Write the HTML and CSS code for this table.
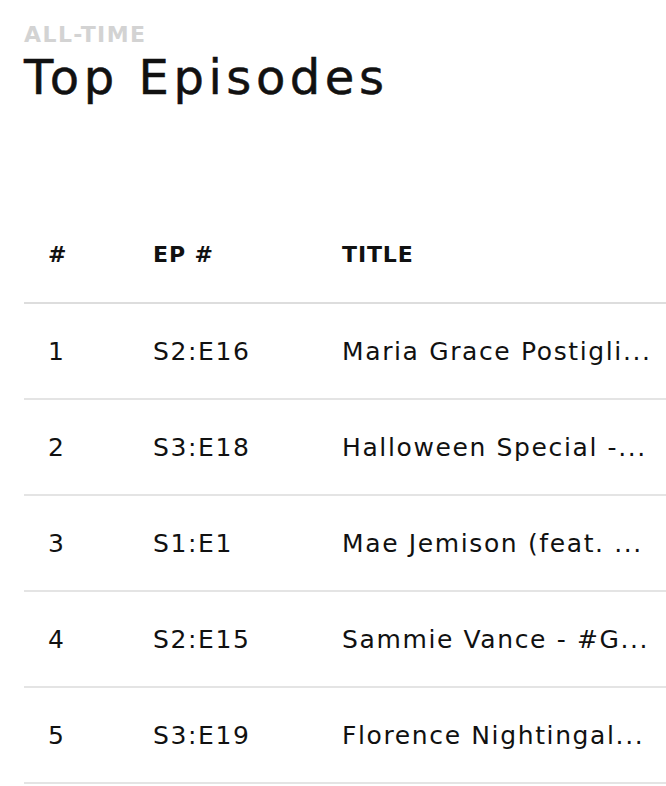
FILE: index.html
```html
<!DOCTYPE html>
<html>
<head>
<meta charset="utf-8">
<link rel="stylesheet" href="styles.css">
</head>
<body>
<main class="page">
  <header class="head">
    <div class="eyebrow">ALL-TIME</div>
    <h1 class="title">Top Episodes</h1>
  </header>
  <table class="episodes">
    <colgroup>
      <col class="col-rank">
      <col class="col-ep">
      <col class="col-title">
    </colgroup>
    <thead>
      <tr><th>#</th><th>EP #</th><th>TITLE</th></tr>
    </thead>
    <tbody>
      <tr><td>1</td><td>S2:E16</td><td>Maria Grace Postigli...</td></tr>
      <tr><td>2</td><td>S3:E18</td><td>Halloween Special -...</td></tr>
      <tr><td>3</td><td>S1:E1</td><td>Mae Jemison (feat. ...</td></tr>
      <tr><td>4</td><td>S2:E15</td><td>Sammie Vance - #G...</td></tr>
      <tr><td>5</td><td>S3:E19</td><td>Florence Nightingal...</td></tr>
    </tbody>
  </table>
</main>
</body>
</html>
```
FILE: styles.css
```css
html, body {
  margin: 0;
  padding: 0;
  background: #ffffff;
}
body {
  font-family: "DejaVu Sans", "Liberation Sans", sans-serif;
  color: #111111;
  overflow: hidden;
}
.page {
  padding: 21px 0 0 24px;
}
.head {
  display: flex;
  flex-direction: column;
}
.eyebrow {
  font-size: 22px;
  font-weight: 700;
  line-height: 28px;
  color: #d3d3d3;
  letter-spacing: 0.065em;
}
.title {
  margin: 0;
  font-size: 48px;
  font-weight: 400;
  line-height: 56px;
  color: #111111;
  letter-spacing: 0.095em;
  -webkit-text-stroke: 0.5px #111111;
}
.episodes {
  margin-top: 102px;
  width: 642px;
  border-collapse: collapse;
  table-layout: fixed;
}
.col-rank { width: 105px; }
.col-ep { width: 189px; }
.col-title { width: 348px; }
.episodes th, .episodes td {
  box-sizing: border-box;
  padding: 0 0 0 24px;
  text-align: left;
  white-space: nowrap;
  overflow: hidden;
}
.episodes th {
  height: 96px;
  font-size: 22px;
  font-weight: 700;
  letter-spacing: 0.04em;
  border-bottom: 2px solid #dddddd;
}
.episodes td {
  height: 96px;
  font-size: 25px;
  font-weight: 400;
  letter-spacing: 0.065em;
  border-bottom: 2px solid #e4e4e4;
}
```
